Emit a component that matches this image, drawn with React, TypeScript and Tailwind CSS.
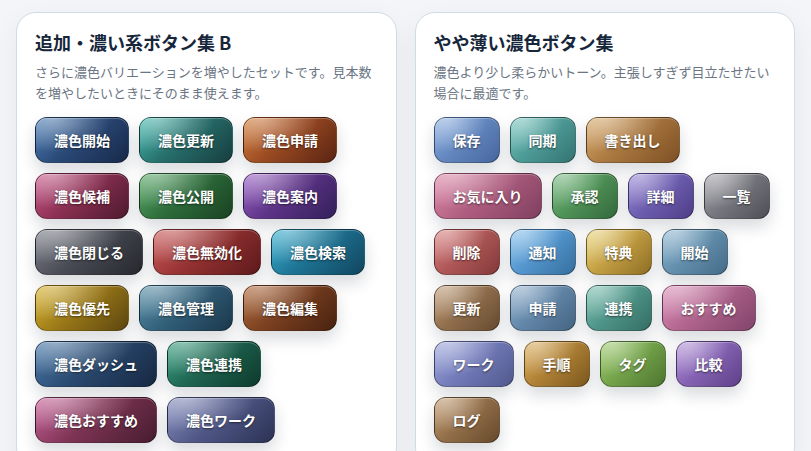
import React from 'react';

type Chip = {
    label: string;
    tone: string;
};

// 濃い系のボタン（濃色）
const deepChips: Chip[] = [
    { label: '濃色開始', tone: 'bg-[linear-gradient(135deg,#4f80b8_0%,#2a4a78_45%,#18294a_100%)]' },
    { label: '濃色更新', tone: 'bg-[linear-gradient(135deg,#45b8b0_0%,#27706c_45%,#173e40_100%)]' },
    { label: '濃色申請', tone: 'bg-[linear-gradient(135deg,#d4803e_0%,#9a4a22_45%,#5a2412_100%)]' },
    { label: '濃色候補', tone: 'bg-[linear-gradient(135deg,#c8588a_0%,#8c3052_45%,#4e1a2e_100%)]' },
    { label: '濃色公開', tone: 'bg-[linear-gradient(135deg,#5aaa68_0%,#2e6e3c_45%,#1a4222_100%)]' },
    { label: '濃色案内', tone: 'bg-[linear-gradient(135deg,#9a60c4_0%,#5e3488_45%,#33205a_100%)]' },
    { label: '濃色閉じる', tone: 'bg-[linear-gradient(135deg,#7a7e88_0%,#484b54_45%,#26282e_100%)]' },
    { label: '濃色無効化', tone: 'bg-[linear-gradient(135deg,#cc5a5a_0%,#963232_45%,#5e1a1c_100%)]' },
    { label: '濃色検索', tone: 'bg-[linear-gradient(135deg,#38b0d0_0%,#1e7494_45%,#114660_100%)]' },
    { label: '濃色優先', tone: 'bg-[linear-gradient(135deg,#d8b430_0%,#9c7a18_45%,#5c4610_100%)]' },
    { label: '濃色管理', tone: 'bg-[linear-gradient(135deg,#5890a8_0%,#32607a_45%,#1c384c_100%)]' },
    { label: '濃色編集', tone: 'bg-[linear-gradient(135deg,#b06a3a_0%,#7a4020_45%,#482210_100%)]' },
    { label: '濃色ダッシュ', tone: 'bg-[linear-gradient(135deg,#4a7aaa_0%,#2a4a70_45%,#172842_100%)]' },
    { label: '濃色連携', tone: 'bg-[linear-gradient(135deg,#38a080_0%,#1e6450_45%,#0e3a2c_100%)]' },
    { label: '濃色おすすめ', tone: 'bg-[linear-gradient(135deg,#c8609a_0%,#7e3454_45%,#461c30_100%)]' },
    { label: '濃色ワーク', tone: 'bg-[linear-gradient(135deg,#8890c0_0%,#505888_45%,#2c3254_100%)]' },
];

// やや薄い濃色
const softChips: Chip[] = [
    { label: '保存', tone: 'bg-[linear-gradient(135deg,#8cb0e0_0%,#6488c0_45%,#4766a0_100%)]' },
    { label: '同期', tone: 'bg-[linear-gradient(135deg,#7cc8c0_0%,#4e9c98_45%,#347472_100%)]' },
    { label: '書き出し', tone: 'bg-[linear-gradient(135deg,#d8aa6c_0%,#aa7840_45%,#7e5024_100%)]' },
    { label: 'お気に入り', tone: 'bg-[linear-gradient(135deg,#de8aa8_0%,#b05e80_45%,#804060_100%)]' },
    { label: '承認', tone: 'bg-[linear-gradient(135deg,#7cbc84_0%,#509458_45%,#33683c_100%)]' },
    { label: '詳細', tone: 'bg-[linear-gradient(135deg,#9a8ad6_0%,#6e5eb0_45%,#4e3e88_100%)]' },
    { label: '一覧', tone: 'bg-[linear-gradient(135deg,#a4a4ac_0%,#77777f_45%,#4e4e56_100%)]' },
    { label: '削除', tone: 'bg-[linear-gradient(135deg,#dc8080_0%,#b05858_45%,#843a3a_100%)]' },
    { label: '通知', tone: 'bg-[linear-gradient(135deg,#84c0ec_0%,#5496ce_45%,#35709e_100%)]' },
    { label: '特典', tone: 'bg-[linear-gradient(135deg,#ead478_0%,#c4a044_45%,#8e6e24_100%)]' },
    { label: '開始', tone: 'bg-[linear-gradient(135deg,#90b8d2_0%,#6490ae_45%,#446c88_100%)]' },
    { label: '更新', tone: 'bg-[linear-gradient(135deg,#c09c78_0%,#92704e_45%,#664a30_100%)]' },
    { label: '申請', tone: 'bg-[linear-gradient(135deg,#90b0cc_0%,#6488aa_45%,#446482_100%)]' },
    { label: '連携', tone: 'bg-[linear-gradient(135deg,#7cc0b0_0%,#50968a_45%,#346e64_100%)]' },
    { label: 'おすすめ', tone: 'bg-[linear-gradient(135deg,#dc90b8_0%,#b0648e_45%,#82446a_100%)]' },
    { label: 'ワーク', tone: 'bg-[linear-gradient(135deg,#a0a8dc_0%,#737cba_45%,#51598e_100%)]' },
    { label: '手順', tone: 'bg-[linear-gradient(135deg,#dcae5c_0%,#b08236_45%,#7c581e_100%)]' },
    { label: 'タグ', tone: 'bg-[linear-gradient(135deg,#a0cc70_0%,#74a44a_45%,#4e7630_100%)]' },
    { label: '比較', tone: 'bg-[linear-gradient(135deg,#b494d8_0%,#8664b4_45%,#5e4088_100%)]' },
    { label: 'ログ', tone: 'bg-[linear-gradient(135deg,#c09a70_0%,#94704a_45%,#664a2c_100%)]' },
];

function GlossButton({ label, tone }: Chip) {
    return (
        <button
            type="button"
            className={`relative overflow-hidden rounded-[12px] border border-black/35 px-[18px] py-3 text-[14px] font-bold leading-5 text-white [text-shadow:0_1px_2px_rgba(0,0,0,0.55)] shadow-[0_8px_16px_rgba(15,23,42,0.16),inset_0_1px_0_rgba(255,255,255,0.25)] ${tone}`}
        >
            {/* top-left gloss */}
            <span className="pointer-events-none absolute inset-0 bg-[radial-gradient(ellipse_at_18%_0%,rgba(255,255,255,0.45),rgba(255,255,255,0)_55%)]" />
            <span className="relative">{label}</span>
        </button>
    );
}

function ButtonCard({ title, description, chips }: { title: string; description: string; chips: Chip[] }) {
    return (
        <section className="rounded-[20px] border border-[#cddde8] bg-white px-[18px] pt-4 pb-6 shadow-[0_10px_30px_rgba(15,23,42,0.06)]">
            <h2 className="text-[18px] font-bold leading-[26px] text-[#17273b]">{title}</h2>
            <p className="mt-[6px] text-[13px] leading-[21px] text-[#6b7583]">{description}</p>
            <div className="mt-[14px] flex flex-wrap gap-2.5">
                {chips.map((chip) => (
                    <GlossButton key={chip.label} {...chip} />
                ))}
            </div>
        </section>
    );
}

export default function App() {
    return (
        <div className="min-h-screen bg-[#f3f5f8] px-4 pt-3 pb-8 font-['Noto_Sans_CJK_JP','Noto_Sans',sans-serif]">
            <div className="grid grid-cols-2 gap-[18px]">
                <ButtonCard
                    title="追加・濃い系ボタン集 B"
                    description="さらに濃色バリエーションを増やしたセットです。見本数を増やしたいときにそのまま使えます。"
                    chips={deepChips}
                />
                <ButtonCard
                    title="やや薄い濃色ボタン集"
                    description="濃色より少し柔らかいトーン。主張しすぎず目立たせたい場合に最適です。"
                    chips={softChips}
                />
            </div>
        </div>
    );
}
